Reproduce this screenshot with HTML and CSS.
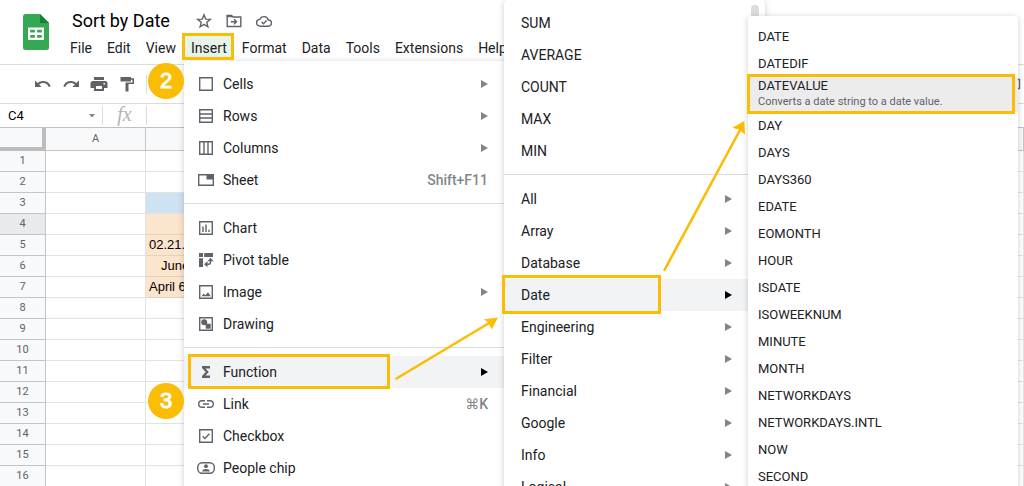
FILE: index.html
```html
<!DOCTYPE html>
<html lang="en">
<head>
<meta charset="utf-8">
<title>Sort by Date</title>
<link rel="stylesheet" href="styles.css">
</head>
<body>
<header class="header">
  <svg class="logo" viewBox="0 0 26 36" aria-hidden="true">
    <path d="M2.500 0H17l9 9v24.500a2.500 2.500 0 0 1-2.500 2.500h-21A2.500 2.500 0 0 1 0 33.500v-31A2.500 2.500 0 0 1 2.500 0z" fill="#34a853"/>
    <path d="M17 0l9 9h-9z" fill="#188038"/>
    <path d="M5 13.500h16v12.500H5zM7.200 15.700v2.900h4.700v-2.900zM14.100 15.700v2.900h4.700v-2.900zM7.200 20.900v2.900h4.700v-2.900zM14.100 20.900v2.900h4.700v-2.900z" fill="#fff" fill-rule="evenodd"/>
  </svg>
  <div class="heading">
    <div class="title-row">
      <h1 class="title">Sort by Date</h1>
      <button class="icon-button" aria-label="Star"><svg class="title-icon" viewBox="0 0 16 16"><path d="M8 1.800l1.700 4.300 4.600.3-3.500 2.900 1.100 4.500L8 11.300l-3.900 2.500 1.100-4.500-3.500-2.900 4.600-.3z" class="line"/></svg></button>
      <button class="icon-button" aria-label="Move"><svg class="title-icon" viewBox="0 0 16 16"><path d="M1.200 2.500h4.300l1.500 1.500h7.800v9.500H1.200z" class="line"/><path d="M.8 2h5l1.500 2.300H.8z" class="solid"/><path d="M4.800 8.700h5.500M8 6.200l2.500 2.500L8 11.200" class="line"/></svg></button>
      <button class="icon-button" aria-label="Saved to Drive"><svg class="title-icon" viewBox="0 0 16 16"><path d="M4.200 13.200a3.400 3.400 0 0 1-.4-6.800A4.500 4.500 0 0 1 12.300 7a3.100 3.100 0 0 1 .2 6.200z" class="line"/><path d="M5.600 9l1.800 1.800L10.600 7.600" class="line"/></svg></button>
    </div>
    <nav class="menubar">
      <button class="menubar-item">File</button>
      <button class="menubar-item">Edit</button>
      <button class="menubar-item">View</button>
      <button class="menubar-item open">Insert</button>
      <button class="menubar-item">Format</button>
      <button class="menubar-item">Data</button>
      <button class="menubar-item">Tools</button>
      <button class="menubar-item">Extensions</button>
      <button class="menubar-item">Help</button>
    </nav>
  </div>
</header>

<div class="toolbar">
  <button class="icon-button" aria-label="Undo"><svg class="tool-icon" viewBox="0 0 18 18"><path d="M1 5.500v6.500h6.500L5.100 9.500C6.200 8.600 7.500 8 9 8c2.700 0 4.800 1.400 5.700 3.900l2-.7C15.600 7.900 12.700 6 9 6c-2 0-3.800.8-5.300 2.100z" class="solid"/></svg></button>
  <button class="icon-button" aria-label="Redo"><svg class="tool-icon" viewBox="0 0 18 18"><path d="M17 5.500v6.500h-6.500l2.400-2.500C11.800 8.600 10.500 8 9 8c-2.700 0-4.800 1.400-5.700 3.900l-2-.7C2.400 7.900 5.300 6 9 6c2 0 3.800.8 5.300 2.100z" class="solid"/></svg></button>
  <button class="icon-button" aria-label="Print"><svg class="tool-icon" viewBox="0 0 18 18"><path d="M4 2h10v3H4zM3 6h12a2.500 2.500 0 0 1 2.500 2.500V13H14v3H4v-3H.5V8.500A2.500 2.500 0 0 1 3 6zM6 11v3h6v-3zM13.500 8v1.500H15V8z" class="solid" fill-rule="evenodd"/></svg></button>
  <button class="icon-button" aria-label="Paint format"><svg class="tool-icon" viewBox="0 0 18 18"><path d="M2.500 2h10.500v1.300h3V9h-5.500v7.500H7.500V7.500h7V4.800H13v1.700H2.500z" class="solid"/></svg></button>
  <span class="rule"></span>
  <svg class="toolbar-end" viewBox="0 0 6 12" aria-hidden="true"><path d="M0 1.500h1.500v9H0" class="line"/></svg>
</div>

<div class="formula-bar">
  <input class="name-box" aria-label="Name box" value="C4">
  <svg class="caret" viewBox="0 0 6 4" aria-hidden="true"><path d="M0 0h6L3 3.500z" fill="#80868b"/></svg>
  <span class="rule"></span>
  <span class="fx">fx</span>
  <span class="rule"></span>
  <input class="formula-input" aria-label="Formula">
</div>

<table class="sheet">
  <thead><tr><th class="corner"></th><th class="col-a">A</th><th class="col-b"></th><th></th></tr></thead>
  <tbody>
    <tr><th>1</th><td></td><td></td><td></td></tr>
    <tr><th>2</th><td></td><td></td><td></td></tr>
    <tr><th>3</th><td></td><td class="blue"></td><td></td></tr>
    <tr><th class="active">4</th><td></td><td class="peach"></td><td></td></tr>
    <tr><th>5</th><td></td><td class="peach">02.21.</td><td></td></tr>
    <tr><th>6</th><td></td><td class="peach indent">June</td><td></td></tr>
    <tr><th>7</th><td></td><td class="peach">April 6</td><td></td></tr>
    <tr><th>8</th><td></td><td></td><td></td></tr>
    <tr><th>9</th><td></td><td></td><td></td></tr>
    <tr><th>10</th><td></td><td></td><td></td></tr>
    <tr><th>11</th><td></td><td></td><td></td></tr>
    <tr><th>12</th><td></td><td></td><td></td></tr>
    <tr><th>13</th><td></td><td></td><td></td></tr>
    <tr><th>14</th><td></td><td></td><td></td></tr>
    <tr><th>15</th><td></td><td></td><td></td></tr>
    <tr><th>16</th><td></td><td></td><td></td></tr>
  </tbody>
</table>

<div class="menu insert-menu">
  <button class="item"><svg class="icon" viewBox="0 0 18 18"><path d="M2.700 2.700h12.600v12.600H2.700z" class="line"/></svg>Cells<span class="more"></span></button>
  <button class="item"><svg class="icon" viewBox="0 0 18 18"><path d="M2.700 2.700h12.600v12.600H2.700zM3 7h12M3 11h12" class="line"/></svg>Rows<span class="more"></span></button>
  <button class="item"><svg class="icon" viewBox="0 0 18 18"><path d="M2.700 2.700h12.600v12.600H2.700zM7 3v12M11 3v12" class="line"/></svg>Columns<span class="more"></span></button>
  <button class="item"><svg class="icon" viewBox="0 0 18 18"><path d="M1.700 3.700h14.600v10.600H1.700z" class="line"/><path d="M9.500 4H16v4.500H9.500z" class="solid"/></svg>Sheet<kbd class="shortcut">Shift+F11</kbd></button>
  <hr class="separator">
  <button class="item"><svg class="icon" viewBox="0 0 18 18"><path d="M2.700 2.700h12.600v12.600H2.700zM6 7.500V13M9 5.500V13M12 10.800V13" class="line"/></svg>Chart</button>
  <button class="item"><svg class="icon" viewBox="0 0 18 18"><path d="M2 2h4v4H2zM7.200 2H16v4H7.200zM2 7.200h4V16H2z" class="solid"/><path d="M9 13.300h2.500a2 2 0 0 0 2-2V9" class="line"/><path d="M13.500 6.800l3 3.500h-6zM7 13.300l3.500-3v6z" class="solid"/></svg>Pivot table</button>
  <button class="item"><svg class="icon" viewBox="0 0 18 18"><path d="M2.700 2.700h12.600v12.600H2.700z" class="line"/><path d="M4.500 13.200l2.200-2.700 1.700 1.700 2.600-3 2.700 4z" class="solid"/></svg>Image<span class="more"></span></button>
  <button class="item"><svg class="icon" viewBox="0 0 18 18"><path d="M2.700 2.700h12.600v12.600H2.700z" class="line"/><circle cx="7.200" cy="7.200" r="3" class="solid"/><path d="M8.700 8.700h5v5h-5z" class="solid"/></svg>Drawing</button>
  <hr class="separator">
  <button class="item current"><svg class="icon" viewBox="0 0 18 18"><path d="M5 3h8v2.500H8.500L11.800 9l-3.300 3.500H13V15H5v-2l3.700-4L5 5z" class="solid"/></svg>Function<span class="more"></span></button>
  <button class="item"><svg class="icon" viewBox="0 0 18 18"><path d="M8 5.700H5a3.300 3.300 0 0 0 0 6.600h3M10 5.700h3a3.300 3.300 0 0 1 0 6.600h-3M6 9h6" class="line"/></svg>Link<kbd class="shortcut">⌘K</kbd></button>
  <button class="item"><svg class="icon" viewBox="0 0 18 18"><path d="M2.700 2.700h12.600v12.600H2.700zM5.700 9.200l2.200 2.200 4.500-4.600" class="line"/></svg>Checkbox</button>
  <button class="item"><svg class="icon" viewBox="0 0 18 18"><rect x="0.700" y="3.700" width="16.600" height="10.600" rx="4.500" class="line"/><circle cx="9" cy="7.200" r="1.900" class="solid"/><path d="M5.200 12.500c0-2 2-2.600 3.800-2.600s3.800.6 3.800 2.600z" class="solid"/></svg>People chip</button>
</div>

<div class="menu function-menu">
  <span class="scroll-thumb"></span>
  <button class="item">SUM</button>
  <button class="item">AVERAGE</button>
  <button class="item">COUNT</button>
  <button class="item">MAX</button>
  <button class="item">MIN</button>
  <hr class="separator">
  <button class="item">All<span class="more"></span></button>
  <button class="item">Array<span class="more"></span></button>
  <button class="item">Database<span class="more"></span></button>
  <button class="item current">Date<span class="more"></span></button>
  <button class="item">Engineering<span class="more"></span></button>
  <button class="item">Filter<span class="more"></span></button>
  <button class="item">Financial<span class="more"></span></button>
  <button class="item">Google<span class="more"></span></button>
  <button class="item">Info<span class="more"></span></button>
  <button class="item">Logical<span class="more"></span></button>
</div>

<div class="menu date-menu">
  <button class="item">DATE</button>
  <button class="item">DATEDIF</button>
  <button class="item current">DATEVALUE<small class="hint">Converts a date string to a date value.</small></button>
  <button class="item">DAY</button>
  <button class="item">DAYS</button>
  <button class="item">DAYS360</button>
  <button class="item">EDATE</button>
  <button class="item">EOMONTH</button>
  <button class="item">HOUR</button>
  <button class="item">ISDATE</button>
  <button class="item">ISOWEEKNUM</button>
  <button class="item">MINUTE</button>
  <button class="item">MONTH</button>
  <button class="item">NETWORKDAYS</button>
  <button class="item">NETWORKDAYS.INTL</button>
  <button class="item">NOW</button>
  <button class="item">SECOND</button>
</div>

<span class="frame frame-insert"></span>
<span class="frame frame-function"></span>
<span class="frame frame-date"></span>
<span class="frame frame-datevalue"></span>
<span class="step step-two">2</span>
<span class="step step-three">3</span>
<svg class="arrows" width="1024" height="486" viewBox="0 0 1024 486" aria-hidden="true">
  <path d="M396.500 378.500L490 322.500M664.500 270L740 130" class="shaft"/>
  <path d="M498 317.500l-14 1.800 4.500 3.700 3.200 6.500zM744.300 121l-12 6.700 7.200 2 5.500 5z" class="head"/>
</svg>
</body>
</html>
```
FILE: styles.css
```css
* {
  box-sizing: border-box;
}

body {
  position: relative;
  min-height: 100vh;
  margin: 0;
  overflow: hidden;
  background: #fff;
  color: #202124;
  font: 14px/20px Roboto, sans-serif;
}

button {
  margin: 0;
  padding: 0;
  border: 0;
  background: none;
  color: inherit;
  font: inherit;
}

input {
  min-width: 0;
  padding: 0;
  border: 0;
  outline: 0;
  background: none;
  color: #000;
  font: inherit;
}

svg {
  display: block;
}

.line {
  fill: none;
  stroke: #5f6368;
  stroke-width: 1.4;
}

.solid {
  fill: #5f6368;
}

.header {
  display: flex;
  height: 65px;
  padding: 14px 0 0 23px;
  border-bottom: 1px solid #dadce0;
}

.logo {
  width: 26px;
  height: 36px;
  margin-right: 14px;
}

.heading {
  margin-top: -4px;
}

.title-row {
  display: flex;
  align-items: center;
  gap: 14px;
  height: 22px;
  padding-left: 9px;
}

.title {
  margin: 0 12px 0 0;
  color: #000;
  font-size: 18px;
  font-weight: 400;
  line-height: 22px;
}

.title-icon {
  width: 16px;
  height: 16px;
}

.menubar {
  display: flex;
  gap: 1px;
  margin-top: 4px;
}

.menubar-item {
  height: 24px;
  padding: 0 7px;
}

.menubar-item.open {
  background: #e6f4ea;
}

.toolbar {
  display: flex;
  align-items: center;
  gap: 10px;
  height: 39px;
  padding-left: 34px;
  border-bottom: 1px solid #dadce0;
}

.tool-icon {
  width: 18px;
  height: 18px;
}

.rule {
  width: 1px;
  height: 19px;
  background: #dadce0;
}

.toolbar-end {
  width: 6px;
  height: 12px;
  margin-left: auto;
}

.formula-bar {
  display: flex;
  align-items: center;
  height: 24px;
  padding-left: 8px;
  border-bottom: 1px solid #c0c0c0;
}

.name-box {
  width: 81px;
  font-size: 13px;
}

.caret {
  width: 6px;
  height: 4px;
  margin-right: 7px;
}

.fx {
  width: 43px;
  padding-bottom: 4px;
  color: #b4b4b4;
  font: italic 20px/20px "Liberation Serif", serif;
  text-align: center;
}

.formula-input {
  flex: 1;
}

.sheet {
  width: 100%;
  border-spacing: 0;
  table-layout: fixed;
  color: #000;
  font: 13px/16px "Liberation Sans", sans-serif;
}

.sheet th,
.sheet td {
  height: 21px;
  padding: 0;
  border-right: 1px solid #e2e3e3;
  border-bottom: 1px solid #e2e3e3;
}

.sheet th {
  border-color: #c4c6c6;
  background: #f8f9fa;
  color: #5f6368;
  font: 11px/16px Roboto, sans-serif;
}

.sheet thead th {
  height: 23px;
}

.sheet td {
  padding-left: 3px;
}

.sheet .corner {
  width: 46px;
  border-right: 4px solid #bdbdbd;
  border-bottom: 4px solid #bdbdbd;
}

.sheet .col-a {
  width: 100px;
}

.sheet .col-b {
  width: 160px;
}

.sheet .active {
  background: #e8eaed;
}

.sheet .blue {
  background: #cfe2f3;
}

.sheet .peach {
  border-bottom-color: #e6d2bc;
  background: #fce5cd;
}

.sheet .indent {
  padding-left: 15px;
}

.menu {
  position: absolute;
  display: flex;
  flex-direction: column;
  border-radius: 4px;
  background: #fff;
  box-shadow: 0 1px 6px rgba(60, 64, 67, 0.25);
}

.item {
  display: flex;
  flex: none;
  align-items: center;
  height: 32px;
  text-align: left;
}

.item.current {
  background: #f1f3f4;
}

.icon {
  width: 18px;
  height: 18px;
  margin-right: 8px;
}

.more {
  margin-left: auto;
  border-top: 4px solid transparent;
  border-bottom: 4px solid transparent;
  border-left: 7px solid #80868b;
}

.current .more {
  border-left-color: #000;
}

.shortcut {
  margin-left: auto;
  color: #80868b;
  font: 500 14px/20px Roboto, "DejaVu Sans", sans-serif;
}

.separator {
  flex: none;
  width: 100%;
  height: 1px;
  margin: 7px 0 8px;
  border: 0;
  background: #dadce0;
}

.insert-menu {
  top: 61px;
  left: 184px;
  width: 330px;
  padding: 7px 0 6px;
  border-radius: 0 4px 4px 4px;
}

.insert-menu .item {
  padding: 0 26px 0 13px;
}

.function-menu {
  top: 0;
  left: 504px;
  width: 261px;
  padding-top: 7px;
}

.function-menu .item {
  padding: 0 33px 0 17px;
}

.scroll-thumb {
  position: absolute;
  top: 5px;
  right: 6px;
  width: 8px;
  height: 160px;
  border-radius: 4px;
  background: #dadce0;
}

.date-menu {
  top: 16px;
  left: 748px;
  width: 270px;
  padding-top: 7px;
  font-size: 13px;
}

.date-menu .item {
  height: 27px;
  padding-left: 10px;
}

.date-menu .current {
  flex-direction: column;
  align-items: flex-start;
  height: 35px;
  background: #ececec;
  line-height: 18px;
}

.hint {
  color: #5f6368;
  font-size: 11px;
  line-height: 14px;
}

.frame {
  position: absolute;
  border: 3px solid #fbbc04;
}

.frame-insert {
  top: 33px;
  left: 182px;
  width: 52px;
  height: 27px;
}

.frame-function {
  top: 354px;
  left: 188px;
  width: 202px;
  height: 35px;
}

.frame-date {
  top: 275px;
  left: 502px;
  width: 159px;
  height: 39px;
}

.frame-datevalue {
  top: 74px;
  left: 747px;
  width: 268px;
  height: 40px;
}

.step {
  position: absolute;
  left: 148px;
  width: 36px;
  height: 36px;
  border-radius: 50%;
  background: #fbbc04;
  color: #fff;
  font: 22px/36px "Liberation Sans", sans-serif;
  -webkit-text-stroke: 1px #fff;
  text-align: center;
}

.step-two {
  top: 63px;
}

.step-three {
  top: 383px;
}

.arrows {
  position: absolute;
  top: 0;
  left: 0;
  pointer-events: none;
}

.shaft {
  fill: none;
  stroke: #fbbc04;
  stroke-width: 2.6;
  stroke-linecap: round;
}

.head {
  fill: #fbbc04;
}
```
